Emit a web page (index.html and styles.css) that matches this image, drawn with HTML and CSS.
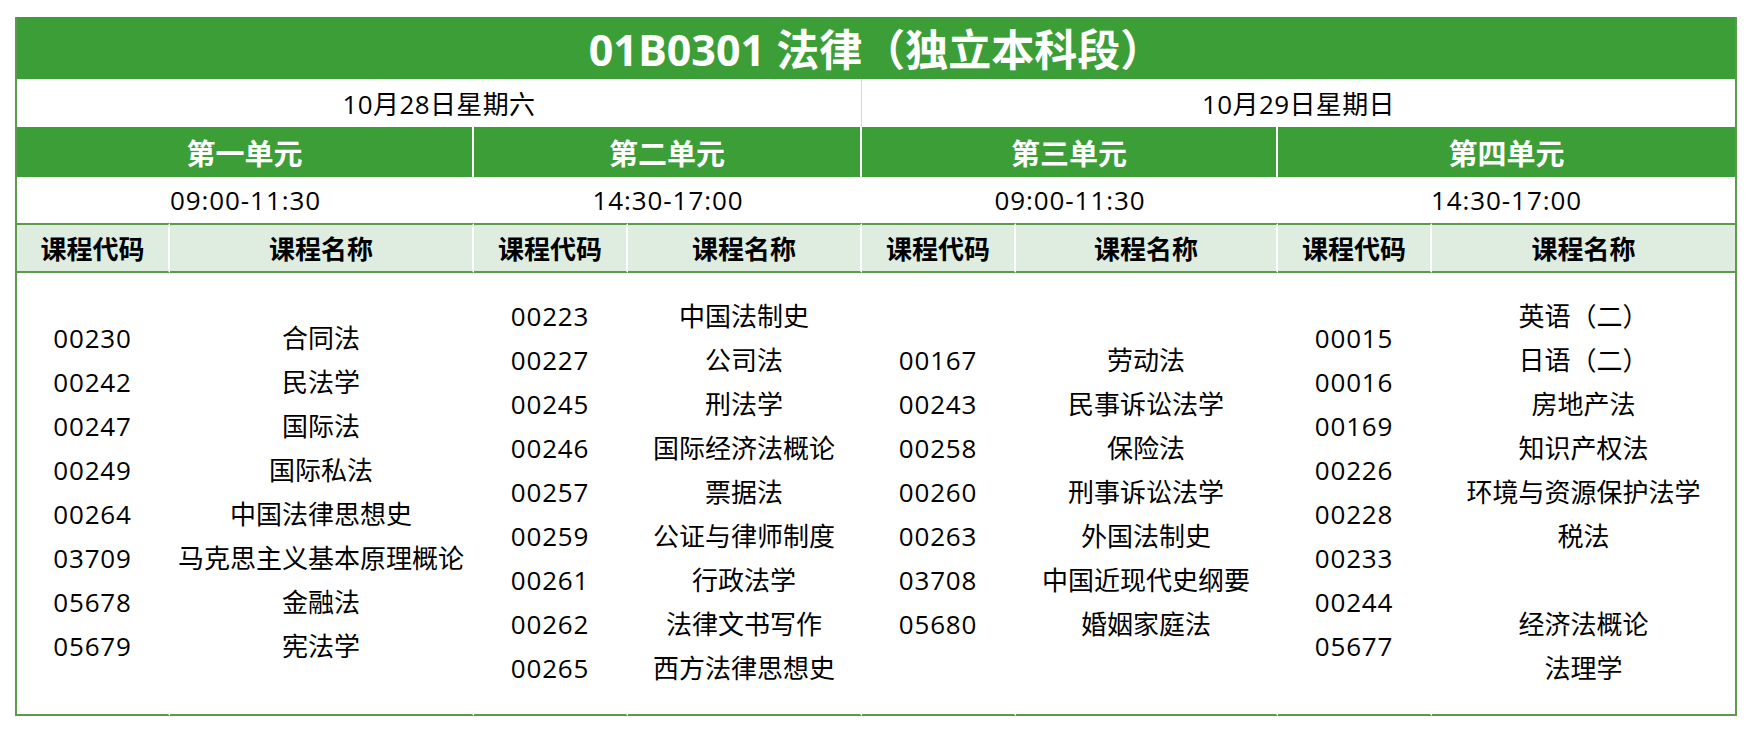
FILE: index.html
```html
<!DOCTYPE html>
<html lang="zh-CN">
<head>
<meta charset="utf-8">
<title>01B0301 法律（独立本科段）</title>
<link rel="stylesheet" href="styles.css">
</head>
<body>
<div class="sheet">
  <div class="title">01B0301 法律（独立本科段）</div>

  <div class="date d1">10月28日星期六</div>
  <div class="date d2">10月29日星期日</div>

  <div class="unit u1">第一单元</div>
  <div class="unit u2">第二单元</div>
  <div class="unit u3">第三单元</div>
  <div class="unit u4">第四单元</div>

  <div class="time u1">09:00-11:30</div>
  <div class="time u2">14:30-17:00</div>
  <div class="time u3">09:00-11:30</div>
  <div class="time u4">14:30-17:00</div>

  <div class="head">课程代码</div>
  <div class="head">课程名称</div>
  <div class="head">课程代码</div>
  <div class="head">课程名称</div>
  <div class="head">课程代码</div>
  <div class="head">课程名称</div>
  <div class="head">课程代码</div>
  <div class="head last">课程名称</div>

  <div class="body code"><div>00230</div><div>00242</div><div>00247</div><div>00249</div><div>00264</div><div>03709</div><div>05678</div><div>05679</div></div>
  <div class="body"><div>合同法</div><div>民法学</div><div>国际法</div><div>国际私法</div><div>中国法律思想史</div><div>马克思主义基本原理概论</div><div>金融法</div><div>宪法学</div></div>
  <div class="body code"><div>00223</div><div>00227</div><div>00245</div><div>00246</div><div>00257</div><div>00259</div><div>00261</div><div>00262</div><div>00265</div></div>
  <div class="body"><div>中国法制史</div><div>公司法</div><div>刑法学</div><div>国际经济法概论</div><div>票据法</div><div>公证与律师制度</div><div>行政法学</div><div>法律文书写作</div><div>西方法律思想史</div></div>
  <div class="body code"><div>00167</div><div>00243</div><div>00258</div><div>00260</div><div>00263</div><div>03708</div><div>05680</div></div>
  <div class="body"><div>劳动法</div><div>民事诉讼法学</div><div>保险法</div><div>刑事诉讼法学</div><div>外国法制史</div><div>中国近现代史纲要</div><div>婚姻家庭法</div></div>
  <div class="body code"><div>00015</div><div>00016</div><div>00169</div><div>00226</div><div>00228</div><div>00233</div><div>00244</div><div>05677</div></div>
  <div class="body last"><div>英语（二）</div><div>日语（二）</div><div>房地产法</div><div>知识产权法</div><div>环境与资源保护法学</div><div>税法</div><div class="blank">&nbsp;</div><div>经济法概论</div><div>法理学</div></div>
</div>
</body>
</html>
```

FILE: styles.css
```css
html, body {
  margin: 0;
  padding: 0;
  background: #ffffff;
}

body {
  font-family: "Open Sans", "Noto Sans CJK SC", sans-serif;
  color: #000000;
}

.sheet {
  margin: 17px 0 0 15px;
  width: 1722px;
  box-sizing: border-box;
  border-left: 2px solid #5a9a48;
  border-right: 2px solid #5a9a48;
  display: grid;
  grid-template-columns: 153px 304px 154px 234px 154px 262px 154px 303px;
  grid-template-rows: 62px 48px 50px 46px 50px 443px;
}

.title {
  grid-column: 1 / -1;
  background: #3c9e37;
  color: #ffffff;
  font-weight: 700;
  font-size: 43px;
  display: flex;
  align-items: center;
  justify-content: center;
  padding-bottom: 2px;
}

.date {
  display: flex;
  align-items: center;
  justify-content: center;
  font-size: 26px;
  letter-spacing: 0.4px;
}

.d1 {
  grid-column: 1 / 5;
  border-right: 1px solid #d6d6d6;
}

.d2 {
  grid-column: 5 / 9;
}

.u1 { grid-column: 1 / 3; }
.u2 { grid-column: 3 / 5; }
.u3 { grid-column: 5 / 7; }
.u4 { grid-column: 7 / 9; }

.unit {
  background: #3c9e37;
  color: #ffffff;
  font-weight: 700;
  font-size: 29px;
  display: flex;
  align-items: center;
  justify-content: center;
  border-right: 2px solid #ffffff;
  box-sizing: border-box;
}

.unit.u4 {
  border-right: none;
}

.time {
  display: flex;
  align-items: center;
  justify-content: center;
  font-size: 26px;
  letter-spacing: 0.9px;
}

.head {
  background: #deede0;
  border-top: 2px solid #5a9a48;
  border-bottom: 2px solid #5a9a48;
  border-right: 2px solid #ffffff;
  box-sizing: border-box;
  font-weight: 700;
  font-size: 26px;
  display: flex;
  align-items: center;
  justify-content: center;
}

.head.last {
  border-right: none;
}

.body {
  border-bottom: 2px solid #5a9a48;
  border-right: 2px solid #ffffff;
  box-sizing: border-box;
  padding-bottom: 4px;
  display: flex;
  flex-direction: column;
  justify-content: center;
  align-items: center;
  font-size: 26px;
  line-height: 44px;
  white-space: nowrap;
}

.body.code {
  letter-spacing: 0.8px;
}

.body.last {
  border-right: none;
}
```
